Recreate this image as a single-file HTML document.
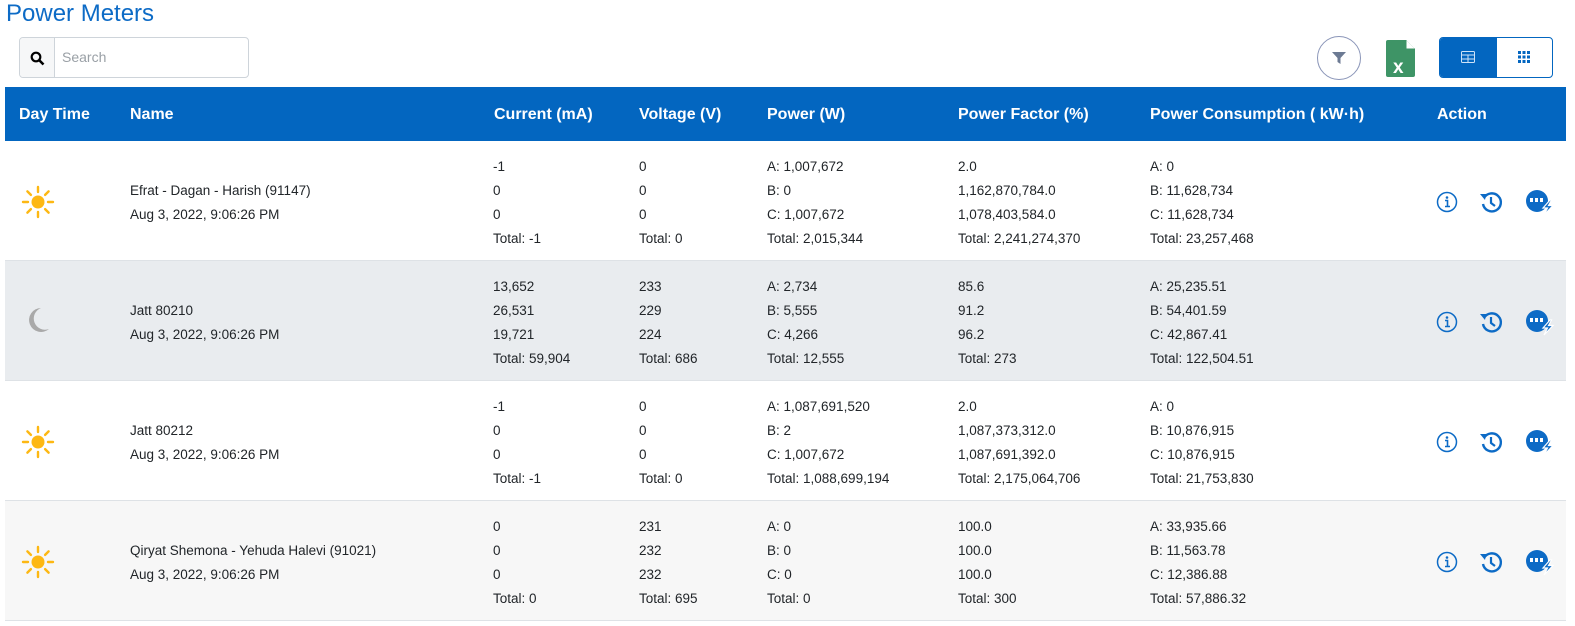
<!DOCTYPE html>
<html><head><meta charset="utf-8"><style>
*{margin:0;padding:0;box-sizing:border-box}
body{width:1575px;height:626px;background:#fff;font-family:"Liberation Sans",sans-serif;color:#212529;position:relative;overflow:hidden}
.a{position:absolute}
h1{position:absolute;left:6px;top:0;font-weight:400;font-size:24px;color:#0d6bc6;}
.hdr{position:absolute;left:5px;top:87px;width:1561px;height:54px;background:#0366c0;color:#fff;font-weight:700;font-size:16px}
.hdr span{position:absolute;top:19px}
.row{position:absolute;left:5px;width:1561px;height:120px;border-bottom:1px solid #dee2e6;font-size:13.5px}
.c{position:absolute;top:14px;line-height:24px}
.nm{position:absolute;top:38px;left:125px;line-height:24px}
.ic{position:absolute;top:48px}
</style></head><body>
<h1>Power Meters</h1>
<div class="a" style="left:19px;top:37px;width:230px;height:41px;border:1px solid #ced4da;border-radius:4px;overflow:hidden">
<div class="a" style="left:0;top:0;width:35px;height:39px;background:#f6f7f8;border-right:1px solid #ced4da"></div>
<svg class="a" style="left:10px;top:13px" width="15" height="15" viewBox="0 0 15 15"><circle cx="6" cy="6" r="4.3" fill="none" stroke="#000" stroke-width="2.2"/><path d="M9 9l4.5 4.5" stroke="#000" stroke-width="2.6"/></svg>
<span class="a" style="left:42px;top:11px;font-size:14px;color:#9aa0a6">Search</span></div>
<div class="a" style="left:1317px;top:36px;width:44px;height:44px;border:1.5px solid #8a95b8;border-radius:50%"></div>
<svg class="a" style="left:1331px;top:51px" width="16" height="14" viewBox="0 0 16 14"><path d="M1 1h14l-5.5 6v6l-3-2v-4z" fill="#6c7a93"/></svg>
<svg class="a" style="left:1386px;top:40px" width="29" height="37" viewBox="0 0 29 37"><path d="M0 2q0-2 2-2h18l9 9v26q0 2-2 2H2q-2 0-2-2z" fill="#3e9466"/><path d="M20 0v9h9z" fill="#fff"/><path d="M20 0v9h9" fill="none" stroke="#3e9466"/><text x="7" y="33" font-size="19" font-weight="700" fill="#fff" font-family="Liberation Sans">x</text></svg>
<div class="a" style="left:1439px;top:37px;width:114px;height:41px;border:1px solid #0366c0;border-radius:4px;overflow:hidden"><div class="a" style="left:0;top:0;width:57px;height:41px;background:#0366c0"></div></div>
<svg class="a" style="left:1461px;top:51px" width="14" height="12" viewBox="0 0 14 12"><rect x="0.5" y="0.5" width="13" height="11" rx="1" fill="none" stroke="#cfe3f7"/><path d="M0.5 4h13M0.5 8h13M7 4v7.5" stroke="#cfe3f7"/></svg>
<svg class="a" style="left:1518px;top:51px" width="12" height="12" viewBox="0 0 12 12" fill="#0366c0"><rect x="0" y="0" width="3" height="3"/><rect x="4.5" y="0" width="3" height="3"/><rect x="9" y="0" width="3" height="3"/><rect x="0" y="4.5" width="3" height="3"/><rect x="4.5" y="4.5" width="3" height="3"/><rect x="9" y="4.5" width="3" height="3"/><rect x="0" y="9" width="3" height="3"/><rect x="4.5" y="9" width="3" height="3"/><rect x="9" y="9" width="3" height="3"/></svg>
<div class="hdr"><span style="left:14px">Day Time</span><span style="left:125px">Name</span><span style="left:489px">Current (mA)</span><span style="left:634px">Voltage (V)</span><span style="left:762px">Power (W)</span><span style="left:953px">Power Factor (%)</span><span style="left:1145px">Power Consumption ( kW·h)</span><span style="left:1432px">Action</span></div>

<div id="rows"></div>
<script>
var sun='<svg class="ic" style="left:16px;top:44px" width="34" height="34" viewBox="0 0 34 34"><circle cx="17" cy="17" r="6.5" fill="#fdb813"/><g stroke="#fdb813" stroke-width="2.4" stroke-linecap="round"><path d="M17 2v5M17 27v5M2 17h5M27 17h5M6.4 6.4l3.5 3.5M24.1 24.1l3.5 3.5M6.4 27.6l3.5-3.5M24.1 9.9l3.5-3.5"/></g></svg>';
var moon='<svg class="ic" style="left:18px;top:44px" width="30" height="30" viewBox="0 0 30 30"><path d="M18 3A12 12 0 1 0 26 24 10 10 0 0 1 18 3z" fill="#a9a9a9"/></svg>';
var act='<svg class="ic" style="left:1431px;top:50px" width="22" height="22" viewBox="0 0 22 22"><circle cx="11" cy="11" r="9.5" fill="none" stroke="#0d6bc6" stroke-width="1.5"/><circle cx="11" cy="6.5" r="1.3" fill="#0d6bc6"/><path d="M9 9.5h2.5v6M9 15.5h5" stroke="#0d6bc6" stroke-width="1.6" fill="none"/></svg>'+
'<svg class="ic" style="left:1474px;top:49px" width="24" height="24" viewBox="0 0 24 24"><path d="M5 8A9 9 0 1 1 4 14" fill="none" stroke="#0d6bc6" stroke-width="2.4"/><path d="M1 4l6 0 -1 6z" fill="#0d6bc6"/><path d="M12 7v6l4 3" stroke="#0d6bc6" stroke-width="2.2" fill="none"/></svg>'+
'<svg class="ic" style="left:1520px;top:48px" width="30" height="28" viewBox="0 0 30 28"><circle cx="12" cy="12" r="11" fill="#0d6bc6"/><rect x="5" y="9" width="3" height="4" fill="#fff"/><rect x="10" y="9" width="3" height="4" fill="#fff"/><rect x="15" y="9" width="3" height="4" fill="#fff"/><path d="M25 11l-7 8h4.5l-3.5 7 9-9.5h-4.5l3-5.5z" fill="#0d6bc6" stroke="#fff" stroke-width="1.2"/></svg>';
var data=[
[sun,'#fff','Efrat - Dagan - Harish (91147)',['-1','0','0','Total: -1'],['0','0','0','Total: 0'],['A: 1,007,672','B: 0','C: 1,007,672','Total: 2,015,344'],['2.0','1,162,870,784.0','1,078,403,584.0','Total: 2,241,274,370'],['A: 0','B: 11,628,734','C: 11,628,734','Total: 23,257,468']],
[moon,'#e9ecef','Jatt 80210',['13,652','26,531','19,721','Total: 59,904'],['233','229','224','Total: 686'],['A: 2,734','B: 5,555','C: 4,266','Total: 12,555'],['85.6','91.2','96.2','Total: 273'],['A: 25,235.51','B: 54,401.59','C: 42,867.41','Total: 122,504.51']],
[sun,'#fff','Jatt 80212',['-1','0','0','Total: -1'],['0','0','0','Total: 0'],['A: 1,087,691,520','B: 2','C: 1,007,672','Total: 1,088,699,194'],['2.0','1,087,373,312.0','1,087,691,392.0','Total: 2,175,064,706'],['A: 0','B: 10,876,915','C: 10,876,915','Total: 21,753,830']],
[sun,'#f7f7f7','Qiryat Shemona - Yehuda Halevi (91021)',['0','0','0','Total: 0'],['231','232','232','Total: 695'],['A: 0','B: 0','C: 0','Total: 0'],['100.0','100.0','100.0','Total: 300'],['A: 33,935.66','B: 11,563.78','C: 12,386.88','Total: 57,886.32']]];
var xs=[488,634,762,953,1145],h='';
data.forEach(function(d,i){h+='<div class="row" style="top:'+(141+i*120)+'px;background:'+d[1]+'">'+d[0]+'<div class="nm">'+d[2]+'<br>Aug 3, 2022, 9:06:26 PM</div>';
for(var k=0;k<5;k++)h+='<div class="c" style="left:'+xs[k]+'px">'+d[3+k].join('<br>')+'</div>';h+=act+'</div>';});
document.getElementById('rows').innerHTML=h;
</script>
</body></html>
